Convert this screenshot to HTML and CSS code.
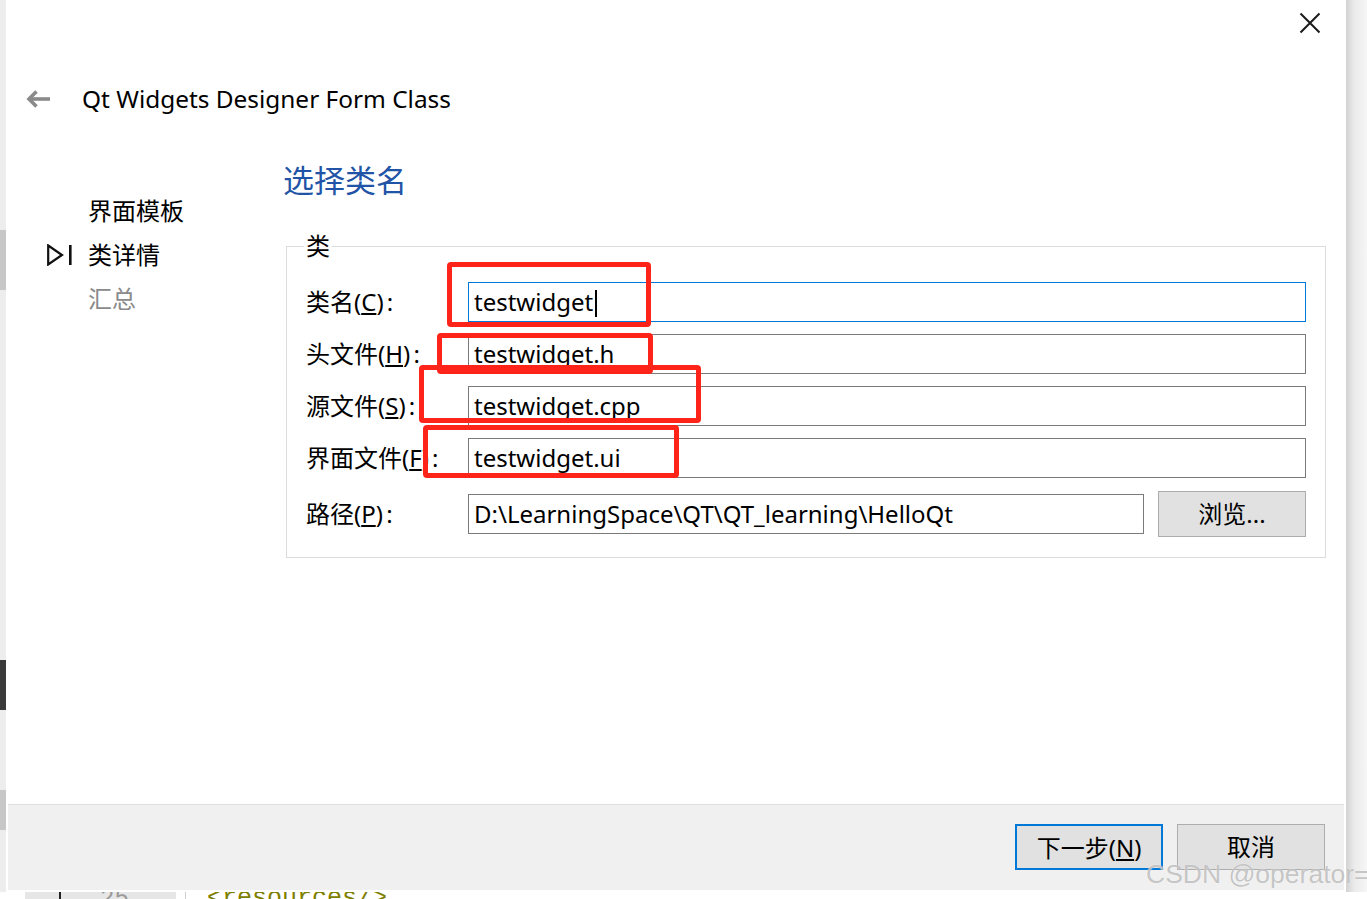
FILE: index.html
```html
<!DOCTYPE html>
<html>
<head>
    <meta charset="UTF-8">
    <title>Qt Widgets Designer Form Class</title>
    <link rel="stylesheet" href="styles.css">
</head>
<body>
<div class="screen">
    <div class="edge-left"></div>

    <div class="dialog">
        <div class="titlebar">
            <svg class="close" width="22" height="22" viewBox="0 0 22 22">
                <path d="M1.5 1.5 L20.5 20.5 M20.5 1.5 L1.5 20.5" stroke="#1a1a1a" stroke-width="2" fill="none"/>
            </svg>
        </div>

        <div class="header">
            <svg class="back" width="24" height="18" viewBox="0 0 24 18">
                <path d="M3 9 H24" stroke="#8a8a8a" stroke-width="3.6" fill="none"/>
                <path d="M10.5 1.5 L3 9 L10.5 16.5" stroke="#8a8a8a" stroke-width="3.6" fill="none"/>
            </svg>
            <span class="title">Qt Widgets Designer Form Class</span>
        </div>

        <div class="body">
            <ul class="steps">
                <li><span class="marker"></span>界面模板</li>
                <li>
                    <span class="marker">
                        <svg width="26" height="22" viewBox="0 0 26 22">
                            <path d="M1.2 1.5 L15 11 L1.2 20.5 Z" stroke="#111" stroke-width="2.2" fill="none" stroke-linejoin="miter"/>
                            <rect x="22" y="1" width="2.6" height="20" fill="#111"/>
                        </svg>
                    </span>类详情
                </li>
                <li class="todo"><span class="marker"></span>汇总</li>
            </ul>

            <div class="page">
                <h2>选择类名</h2>
                <fieldset class="group">
                    <legend>类</legend>
                    <div class="form">
                        <label>类名(<u>C</u>) :</label>
                        <div class="field focus">testwidget<span class="caret"></span></div>

                        <label>头文件(<u>H</u>) :</label>
                        <div class="field">testwidget.h</div>

                        <label>源文件(<u>S</u>) :</label>
                        <div class="field">testwidget.cpp</div>

                        <label>界面文件(<u>F</u>) :</label>
                        <div class="field">testwidget.ui</div>

                        <label>路径(<u>P</u>) :</label>
                        <div class="path-row">
                            <div class="field">D:\LearningSpace\QT\QT_learning\HelloQt</div>
                            <button class="btn">浏览...</button>
                        </div>
                    </div>
                </fieldset>
            </div>
        </div>

        <div class="footer">
            <button class="btn default">下一步(<u>N</u>)</button>
            <button class="btn">取消</button>
        </div>
    </div>

    <div class="shadow-right"></div>

    <div class="editor">
        <div class="gutter"><span class="lineno">25</span></div>
        <div class="code">&lt;resources/&gt;</div>
    </div>

    <!-- annotation boxes drawn over the screenshot -->
    <div class="mark mark-1"></div>
    <div class="mark mark-2"></div>
    <div class="mark mark-3"></div>
    <div class="mark mark-4"></div>

    <div class="watermark">CSDN @operator=</div>
</div>
</body>
</html>
```

FILE: styles.css
```css
* {
    box-sizing: border-box;
}

html, body {
    margin: 0;
    padding: 0;
    overflow: hidden;
}

body {
    font-family: "Noto Sans", "Noto Sans CJK SC", sans-serif;
    color: #000;
    background: #fff;
}

.screen {
    position: relative;
    display: grid;
    grid-template-columns: 6px 1340px 21px;
    grid-template-rows: 892px 7px;
    width: 1367px;
    height: 899px;
}

.edge-left {
    background: linear-gradient(to bottom,
        #ededed 0, #ededed 230px,
        #c7c7c7 230px, #c7c7c7 290px,
        #ededed 290px, #ededed 660px,
        #3a3a3a 660px, #3a3a3a 710px,
        #ededed 710px, #ededed 790px,
        #c7c7c7 790px, #c7c7c7 830px,
        #ededed 830px);
}

.shadow-right {
    background: linear-gradient(to right, #d2d2d2, #ebebeb 40%, #f6f6f6);
}

.dialog {
    display: flex;
    flex-direction: column;
    background: #fff;
    border: 2px solid #fff;
    border-top: 0;
}

.titlebar {
    height: 46px;
    display: flex;
    justify-content: flex-end;
    align-items: flex-start;
    padding-right: 23px;
}

.close {
    margin-top: 12px;
}

.header {
    height: 106px;
    display: flex;
    align-items: center;
    padding-left: 18px;
}

.back {
    margin-right: 32px;
}

.title {
    font-size: 24.4px;
    line-height: 30px;
}

.body {
    flex: 1;
    display: flex;
}

.steps {
    width: 275px;
    margin: 0;
    padding: 37px 0 0 39px;
    list-style: none;
    font-size: 24px;
    line-height: 44px;
}

.steps li {
    display: flex;
    align-items: center;
}

.steps .marker {
    width: 41px;
    height: 22px;
    display: flex;
}

.steps .todo {
    color: #8a8a8a;
}

.page {
    flex: 1;
    padding-right: 18px;
}

.page h2 {
    margin: 8px 0 32px;
    font-size: 31px;
    line-height: 40px;
    font-weight: normal;
    color: #2153a6;
}

.group {
    margin: 0 0 0 3px;
    padding: 22px 19px 20px 19px;
    border: 1px solid #dcdcdc;
    min-width: 0;
}

.group legend {
    padding: 0 2px;
    margin-left: -2px;
    font-size: 24px;
    line-height: 28px;
}

.form {
    display: grid;
    grid-template-columns: 162px 1fr;
    row-gap: 12px;
    align-items: center;
}

.form label {
    font-size: 24px;
    line-height: 40px;
    white-space: nowrap;
    word-spacing: -3px;
}

.form u {
    text-underline-offset: 2px;
}

.field {
    height: 40px;
    border: 1px solid #7a7a7a;
    padding-left: 5px;
    font-size: 24px;
    line-height: 38px;
    white-space: nowrap;
    overflow: hidden;
}

.field.focus {
    border-color: #0078d7;
}

.caret {
    display: inline-block;
    width: 2px;
    height: 27px;
    margin-left: 2px;
    background: #000;
    vertical-align: -6px;
}

.path-row {
    display: flex;
    align-items: center;
    gap: 14px;
    margin-top: 1px;
}

.path-row .field {
    flex: 1;
}

.btn {
    width: 148px;
    height: 46px;
    padding: 0;
    font-family: "Noto Sans", "Noto Sans CJK SC", sans-serif;
    font-size: 24px;
    line-height: 44px;
    color: #000;
    background: #e1e1e1;
    border: 1px solid #adadad;
    border-radius: 0;
}

.btn.default {
    border: 2px solid #0078d7;
}

.footer {
    height: 86px;
    display: flex;
    justify-content: flex-end;
    align-items: flex-start;
    gap: 14px;
    padding: 19px 19px 0 0;
    background: #f0f0f0;
    border-top: 1px solid #dfdfdf;
}

.editor {
    grid-column: 1 / 4;
    display: flex;
    overflow: hidden;
    background: #fff;
}

.gutter {
    width: 151px;
    margin-left: 25px;
    padding-left: 75px;
    background: linear-gradient(to right, #e6e6e6 0, #e6e6e6 34px, #222 34px, #222 36px, #e6e6e6 36px);
    font-family: "Liberation Mono", monospace;
    font-size: 24px;
    line-height: 14px;
    color: #9a9a9a;
}

.code {
    margin-left: 9px;
    padding-left: 21px;
    border-left: 1px solid #d0d0d0;
    font-family: "Liberation Mono", monospace;
    font-size: 25px;
    line-height: 14px;
    color: #808000;
}

.mark {
    position: absolute;
    border: 5px solid #ff2419;
    border-radius: 4px;
}

.mark-1 { left: 447px; top: 262px; width: 204px; height: 65px; }
.mark-2 { left: 437px; top: 333px; width: 216px; height: 41px; }
.mark-3 { left: 419px; top: 365px; width: 282px; height: 58px; }
.mark-4 { left: 423px; top: 425px; width: 256px; height: 53px; }

.watermark {
    position: absolute;
    left: 1146px;
    top: 857px;
    font-family: "Liberation Sans", sans-serif;
    font-size: 26.5px;
    line-height: 34px;
    white-space: nowrap;
    color: rgba(150, 150, 150, 0.55);
    text-shadow: 0 0 1px rgba(255, 255, 255, 0.9);
}
```
